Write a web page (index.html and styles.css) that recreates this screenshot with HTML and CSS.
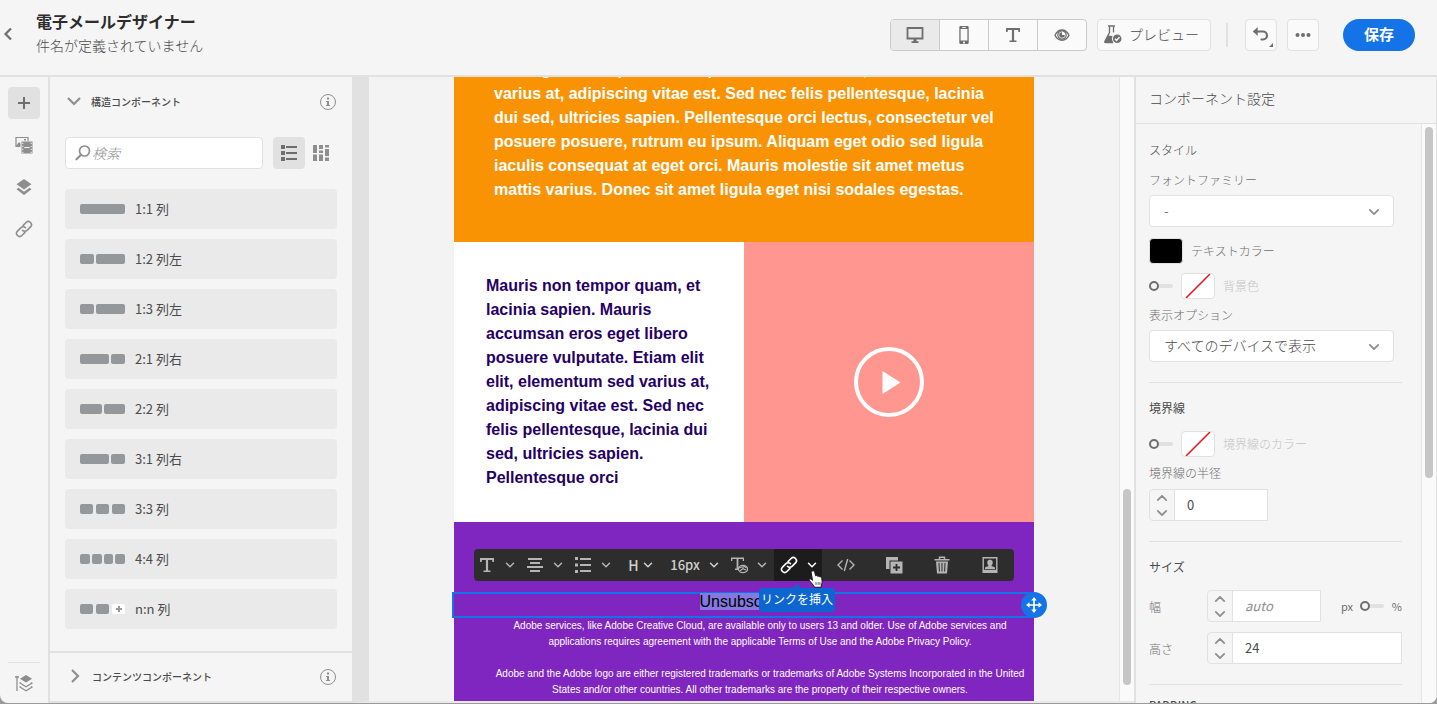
FILE: index.html
```html
<!DOCTYPE html>
<html lang="ja">
<head>
<meta charset="utf-8">
<meta name="viewport" content="width=device-width, initial-scale=1">
<title>電子メールデザイナー</title>
<link rel="stylesheet" href="styles.css">
</head>
<body>
<svg class="sprite" aria-hidden="true">
  <symbol id="chev" viewBox="0 0 10 10"><path d="M1.500 3.200 5 6.700l3.500-3.500" fill="none" stroke="currentColor" stroke-width="1.500" stroke-linecap="round" stroke-linejoin="round"/></symbol>
  <symbol id="info" viewBox="0 0 18 18"><circle cx="9" cy="9" r="7.500" fill="none" stroke="currentColor"/><path d="M8 4.600h2v2H8zM7 8h3v4h1v1H7v-1h1V9H7z" fill="currentColor"/></symbol>
  <symbol id="link" viewBox="0 0 18 18"><g fill="none" stroke="currentColor" stroke-width="1.600" stroke-linecap="round"><path d="M8 5.600 11.100 2.500a3.100 3.100 0 0 1 4.400 4.400L12 10.400a3.100 3.100 0 0 1-4.400 0"/><path d="M10 12.400 6.900 15.500a3.100 3.100 0 0 1-4.400-4.400L6 7.600a3.100 3.100 0 0 1 4.400 0"/></g></symbol>
  <symbol id="text" viewBox="0 0 18 18"><path d="M2 2h14v4h-1.500L14 4h-3.900v10.500h2.400V16h-7v-1.500h2.400V4H4l-.5 2H2z" fill="currentColor"/></symbol>
  <symbol id="list" viewBox="0 0 18 18"><path d="M1 1h4v4H1zM1 7h4v4H1zM1 13h4v4H1zM6 2h11v2H6zM6 8h11v2H6zM6 14h11v2H6z" fill="currentColor"/></symbol>
</svg>
<div class="app">
  <header class="topbar">
    <button class="back" aria-label="戻る"><svg viewBox="0 0 10 14"><path d="M8 1.500 2.500 7 8 12.500" fill="none" stroke="currentColor" stroke-width="2.200"/></svg></button>
    <div class="titles">
      <h1>電子メールデザイナー</h1>
      <p>件名が定義されていません</p>
    </div>
    <div class="segments">
      <button class="is-on" aria-label="デスクトップ"><svg class="i20" viewBox="0 0 20 20"><path d="M2.500 3h15v10.500h-15z" fill="none" stroke="currentColor" stroke-width="1.800"/><path d="M8.500 14h3v2.200h2V18h-7v-1.800h2z" fill="currentColor"/></svg></button>
      <button aria-label="モバイル"><svg class="i20" viewBox="0 0 20 20"><path fill="currentColor" fill-rule="evenodd" d="M6.500 1h7a1.200 1.200 0 0 1 1.200 1.200v15.600a1.200 1.200 0 0 1-1.200 1.200h-7a1.200 1.200 0 0 1-1.200-1.200V2.200A1.200 1.200 0 0 1 6.500 1zM6.600 4v11.600h6.800V4zM8.300 2v1h3.400V2zM10 16.400a1 1 0 1 0 .01 0z"/></svg></button>
      <button aria-label="テキスト"><svg class="i18"><use href="#text"/></svg></button>
      <button aria-label="表示"><svg class="i18" viewBox="0 0 18 18"><path d="M2 9.200C3.500 6 6 4 9 4s5.500 2 7 5.200c-1.500 3.100-4 5-7 5s-5.500-1.900-7-5z" fill="none" stroke="currentColor" stroke-width="1.400"/><circle cx="9" cy="9" r="4.200" fill="none" stroke="currentColor" stroke-width="1.200"/><path d="M9 6.200V9h2.800A2.800 2.800 0 1 1 9 6.200z" fill="currentColor"/></svg></button>
    </div>
    <button class="tool preview"><svg class="i20" viewBox="0 0 20 20"><path d="M6.500 2.500v6L2 17.300a.9.900 0 0 0 .8 1.200H10M10.500 2.500v6" fill="none" stroke="currentColor" stroke-width="1.300"/><path d="M5 1.200h7v1.600H5zM5 11.500l4.500.5L8.800 15l1.600 4H2.500c-1 0-1.500-.7-1-1.600z" fill="currentColor"/><circle cx="14.200" cy="14.700" r="4.300" fill="currentColor"/><path d="m12 14.800 1.600 1.700 2.900-3.400" fill="none" stroke="#fff" stroke-width="1.400"/></svg>プレビュー</button>
    <span class="rule"></span>
    <button class="tool square undo" aria-label="元に戻す"><svg class="i20" viewBox="0 0 20 20"><path d="M3.500 6.500h8.500a4 4 0 0 1 0 8h-1.500" fill="none" stroke="currentColor" stroke-width="2.200" stroke-linecap="round"/><path d="M6.700 2v9L2 6.500z" fill="currentColor"/></svg><i class="corner"></i></button>
    <button class="tool square" aria-label="その他"><svg class="i18" viewBox="0 0 18 18" fill="currentColor"><circle cx="3.500" cy="9" r="2"/><circle cx="9" cy="9" r="2"/><circle cx="14.500" cy="9" r="2"/></svg></button>
    <button class="save">保存</button>
  </header>

  <div class="workspace">
    <nav class="rail">
      <button class="is-on" aria-label="追加"><svg class="i18" viewBox="0 0 18 18"><path d="M9 3v12M3 9h12" stroke="currentColor" stroke-width="2"/></svg></button>
      <button aria-label="アセット"><svg class="i18" viewBox="0 0 18 18"><path d="M5 10.500H1v-9h12V5" fill="none" stroke="currentColor" stroke-width="1.200"/><path d="m1 10 3-4 1.500 1.500v3.300H1zM9 3h2v1.500H9z" fill="currentColor"/><path fill="currentColor" fill-rule="evenodd" d="M6.500 5.500h11v12h-11zM7.300 6.700v1.200h1V6.700zm0 3v1.200h1V9.700zm0 3v1.200h1v-1.200zm0 3v1.200h1v-1.200zm8.400-9v1.200h1V6.700zm0 3v1.200h1V9.700zm0 3v1.200h1v-1.200zm0 3v1.200h1v-1.200zM9.300 11v1h5.400v-1z"/></svg></button>
      <button aria-label="レイヤー"><svg class="i18" viewBox="0 0 18 18" fill="currentColor"><path d="m9 1 7.500 5.200L9 11.500 1.500 6.200zM3.500 9.800 9 13.700l5.500-3.900 2 1.500L9 17l-7.500-5.700z"/></svg></button>
      <button aria-label="リンク"><svg class="i18"><use href="#link"/></svg></button>
      <div class="rail-foot"><button aria-label="構造"><svg class="i18" viewBox="0 0 18 18"><path d="M2 2v15M0 3h4" stroke="currentColor" stroke-width="1.300"/><path d="m11 1 6 3.700-6 3.700-6-3.700z" fill="currentColor"/><path d="m6 8.500-1 .6 6 3.700 6-3.700-1-.6M6 12.500l-1 .6 6 3.700 6-3.700-1-.6" fill="none" stroke="currentColor" stroke-width="1.200"/></svg></button></div>
    </nav>

    <aside class="components">
      <div class="acc">
        <button class="acc-btn"><svg class="i14" viewBox="0 0 14 14"><path d="m1 4 6 6 6-6" fill="none" stroke="currentColor" stroke-width="2.200"/></svg>構造コンポーネント</button>
        <svg class="i18 info"><use href="#info"/></svg>
      </div>
      <div class="searchrow">
        <label class="search"><svg class="i18" viewBox="0 0 18 18"><circle cx="10.500" cy="7" r="5" fill="none" stroke="currentColor" stroke-width="1.700"/><path d="M7 10.800 2.500 15.300" stroke="currentColor" stroke-width="2.200" stroke-linecap="round"/></svg><input type="search" placeholder="検索" aria-label="検索"></label>
        <button class="mode is-on" aria-label="リスト表示"><svg class="i18"><use href="#list"/></svg></button>
        <button class="mode" aria-label="グリッド表示"><svg class="i18" viewBox="0 0 18 18" fill="currentColor"><path d="M1 1h4v8H1zM1 10.500h4V17H1zM7 1h4v4H7zM7 6.500h4V9H7zM7 10.500h4V17H7zM13 1h4v2.500h-4zM13 5h4v7h-4zM13 13.500h4V17h-4z"/></svg></button>
      </div>
      <ul class="cols">
        <li><span class="thumb"><i></i></span>1:1 列</li>
        <li><span class="thumb"><i></i><i class="w2"></i></span>1:2 列左</li>
        <li><span class="thumb"><i></i><i class="w2"></i></span>1:3 列左</li>
        <li><span class="thumb"><i class="w2"></i><i></i></span>2:1 列右</li>
        <li><span class="thumb"><i></i><i></i></span>2:2 列</li>
        <li><span class="thumb"><i class="w2"></i><i></i></span>3:1 列右</li>
        <li><span class="thumb three"><i></i><i></i><i></i></span>3:3 列</li>
        <li><span class="thumb"><i></i><i></i><i></i><i></i></span>4:4 列</li>
        <li><span class="thumb three"><i></i><i></i><i class="plus"></i></span>n:n 列</li>
      </ul>
      <div class="acc acc-closed">
        <button class="acc-btn"><svg class="i14" viewBox="0 0 14 14"><path d="m4 1 6 6-6 6" fill="none" stroke="currentColor" stroke-width="2.200"/></svg>コンテンツコンポーネント</button>
        <svg class="i18 info"><use href="#info"/></svg>
      </div>
    </aside>

    <main class="stage">
      <div class="email">
        <section class="orange">eros eget libero posuere vulputate. Etiam elit elit, elementum sed<br>varius at, adipiscing vitae est. Sed nec felis pellentesque, lacinia<br>dui sed, ultricies sapien. Pellentesque orci lectus, consectetur vel<br>posuere posuere, rutrum eu ipsum. Aliquam eget odio sed ligula<br>iaculis consequat at eget orci. Mauris molestie sit amet metus<br>mattis varius. Donec sit amet ligula eget nisi sodales egestas.</section>
        <section class="split">
          <div class="copy">Mauris non tempor quam, et<br>lacinia sapien. Mauris<br>accumsan eros eget libero<br>posuere vulputate. Etiam elit<br>elit, elementum sed varius at,<br>adipiscing vitae est. Sed nec<br>felis pellentesque, lacinia dui<br>sed, ultricies sapien.<br>Pellentesque orci</div>
          <div class="video"><svg viewBox="0 0 70 70"><circle cx="35" cy="35" r="33" fill="none" stroke="#fff" stroke-width="4"/><path d="M28.500 24 46.500 35.500 28.500 47z" fill="#fff"/></svg></div>
        </section>
        <section class="footer">
          <div class="selected"><mark>Unsubscribe</mark>
            <button class="move" aria-label="移動"><svg class="i18" viewBox="0 0 18 18"><path d="M9 3v12M3 9h12" stroke="#fff" stroke-width="1.700"/><path d="m9 1 2.800 3.500H6.200zM9 17l2.800-3.500H6.200zM1 9l3.500-2.800v5.600zM17 9l-3.500-2.800v5.600z" fill="#fff"/></svg></button>
          </div>
          <p>Adobe services, like Adobe Creative Cloud, are available only to users 13 and older. Use of Adobe services and<br>applications requires agreement with the applicable Terms of Use and the Adobe Privacy Policy.</p>
          <p>Adobe and the Adobe logo are either registered trademarks or trademarks of Adobe Systems Incorporated in the United<br>States and/or other countries. All other trademarks are the property of their respective owners.</p>
          <div class="toolbar" role="toolbar">
            <button aria-label="テキスト"><svg class="i18"><use href="#text"/></svg><svg class="i10"><use href="#chev"/></svg></button>
            <button aria-label="配置"><svg class="i18" viewBox="0 0 18 18" fill="currentColor"><path d="M2 2h14v2H2zM4 6h10v2H4zM1 10h16v2H1zM4 14h10v2H4z"/></svg><svg class="i10"><use href="#chev"/></svg></button>
            <button aria-label="リスト"><svg class="i18" viewBox="0 0 18 18" fill="currentColor"><path d="M1 1h3v3H1zM1 7.500h3v3H1zM1 14h3v3H1zM6 2h11v2H6zM6 8h11v2H6zM6 14h11v2H6z"/></svg><svg class="i10"><use href="#chev"/></svg></button>
            <button class="letter">H<svg class="i10"><use href="#chev"/></svg></button>
            <button class="size">16px<svg class="i10"><use href="#chev"/></svg></button>
            <button aria-label="動的テキスト"><svg class="i18" viewBox="0 0 18 18"><path d="M1 1.500h13V5h-1.300V3H8.400v9.500H10V14H5v-1.500h1.600V3H2.300v2H1z" fill="currentColor"/><ellipse cx="13" cy="13" rx="4.600" ry="3.600" fill="#2d2d2d" stroke="currentColor" stroke-width="1.200"/><path d="M13 9.500v3.300l-3 2M13 12.800l3.500 1.500M9 12l3-1M14 10l2.500 2" stroke="currentColor" stroke-width="1.200" fill="none"/></svg><svg class="i10"><use href="#chev"/></svg></button>
            <button class="active" aria-label="リンクを挿入"><svg class="i18"><use href="#link"/></svg><svg class="i10"><use href="#chev"/></svg></button>
            <button class="single" aria-label="ソース"><svg class="i18" viewBox="0 0 18 18"><path d="M5.500 4.500 1 9l4.500 4.500M12.500 4.500 17 9l-4.500 4.500M10.700 3 7.300 15" fill="none" stroke="currentColor" stroke-width="1.400"/></svg></button>
            <button class="single" aria-label="複製"><svg class="i18" viewBox="0 0 18 18" fill="currentColor"><path d="M1 1h12v3.500H4.500V13H1z"/><path fill-rule="evenodd" d="M5.500 5.500h12v12h-12zM10.600 8v2.600H8v1.800h2.600V15h1.800v-2.600H15v-1.800h-2.600V8z"/></svg></button>
            <button class="single" aria-label="削除"><svg class="i18" viewBox="0 0 18 18"><path d="M1.500 3.800h15M6.500 3.500V1.300h5v2.200" fill="none" stroke="currentColor" stroke-width="1.500"/><path fill="currentColor" fill-rule="evenodd" d="M3 5.500h12L14 17.500H4zM5.500 7l.4 8.500h1L6.500 7zm3 0v8.500h1V7zm3 0-.4 8.500h1l.4-8.500z"/></svg></button>
            <button class="single" aria-label="パーソナライズ"><svg class="i18" viewBox="0 0 18 18"><path d="M2.200 1.700h13.600v14.600H2.200z" fill="none" stroke="currentColor" stroke-width="1.400"/><path d="M2 13.700h14V17H2zM4 13v-1c0-1 2-1.500 3.700-2C6.300 8.500 6 7 6.500 5.300c.6-2 4.400-2 5 0C12 7 11.700 8.500 10.300 10c1.700.5 3.700 1 3.700 2v1z" fill="currentColor"/></svg></button>
          </div>
          <div class="tip" role="tooltip">リンクを挿入</div>
          <svg class="cursor" viewBox="0 0 14 17"><path d="M4 1c1.200-.7 2 .2 2.300 1.300l.8 3.200c1-.6 1.700-.1 2 .5 1-.5 1.600 0 1.900.5 1.300-.4 1.800.6 2 1.700l.3 3.300c0 1.500-.7 2-.9 3.500v1.300H6l-.5-1.300L1.300 10C.5 8.600 1.600 7.800 3 8.800l1.200 1L2.900 2.600c-.1-.7.3-1.300 1.100-1.600z" fill="#fff" stroke="#111" stroke-width=".9"/><path d="M7.500 11.500V14M9.500 11.500V14M11.200 11.500V14" stroke="#222" stroke-width=".7"/></svg>
        </section>
      </div>
      <div class="track stage-track"><i></i></div>
    </main>

    <aside class="settings">
      <h2>コンポーネント設定</h2>
      <div class="settings-body">
        <form class="fields">
          <section>
            <h3 class="soft">スタイル</h3>
            <label class="cap wide" for="family">フォントファミリー</label>
            <div class="select"><select id="family"><option>-</option></select><svg class="i12"><use href="#chev"/></svg></div>
            <div class="swrow first"><button type="button" class="swatch black" aria-label="テキストカラー"></button><span>テキストカラー</span></div>
            <div class="swrow dim"><input class="toggle" type="checkbox" id="bg"><button type="button" class="swatch" aria-label="背景色"><svg viewBox="0 0 32 24"><path d="M4 24 28 0" stroke="#f01018" stroke-width="1.500"/></svg></button><label for="bg">背景色</label></div>
            <label class="cap" for="disp">表示オプション</label>
            <div class="select"><select id="disp"><option>すべてのデバイスで表示</option></select><svg class="i12"><use href="#chev"/></svg></div>
          </section>
          <section>
            <h3>境界線</h3>
            <div class="swrow dim after-title"><input class="toggle" type="checkbox" id="bd"><button type="button" class="swatch" aria-label="境界線のカラー"><svg viewBox="0 0 32 24"><path d="M4 24 28 0" stroke="#f01018" stroke-width="1.500"/></svg></button><label for="bd">境界線のカラー</label></div>
            <label class="cap" for="radius">境界線の半径</label>
            <div class="num radius"><span class="step"><button type="button" aria-label="増やす"><svg class="i12 up"><use href="#chev"/></svg></button><button type="button" aria-label="減らす"><svg class="i12"><use href="#chev"/></svg></button></span><input id="radius" type="text" value="0"></div>
          </section>
          <section>
            <h3>サイズ</h3>
            <div class="sizerow after-title"><label for="w">幅</label><div class="num width"><span class="step"><button type="button" aria-label="増やす"><svg class="i12 up"><use href="#chev"/></svg></button><button type="button" aria-label="減らす"><svg class="i12"><use href="#chev"/></svg></button></span><input id="w" type="text" placeholder="auto"></div><span class="unit">px<input class="toggle" type="checkbox" aria-label="単位">%</span></div>
            <div class="sizerow"><label for="h">高さ</label><div class="num grow"><span class="step"><button type="button" aria-label="増やす"><svg class="i12 up"><use href="#chev"/></svg></button><button type="button" aria-label="減らす"><svg class="i12"><use href="#chev"/></svg></button></span><input id="h" type="text" value="24"></div></div>
          </section>
          <section class="last"><h4>PADDING</h4></section>
        </form>
        <div class="track panel-track"><i></i></div>
      </div>
    </aside>
  </div>
</div>
</body>
</html>
```
FILE: styles.css
```css
*, *::before, *::after { box-sizing: border-box; }
body {
  margin: 0;
  background: #9a9a9a;
  color: #4b4b4b;
  font-family: "Noto Sans CJK JP", "Noto Sans", sans-serif;
  font-size: 14px;
  font-weight: 300;
}
h1, h2, h3, h4, p, ul { margin: 0; padding: 0; }
button, input, select { font: inherit; color: inherit; }
button { display: flex; align-items: center; justify-content: center; padding: 0; border: 0; background: none; }
svg { flex: none; display: block; }
.sprite { position: absolute; width: 0; height: 0; }
.i10 { width: 10px; height: 10px; }
.i12 { width: 12px; height: 12px; }
.i14 { width: 14px; height: 14px; }
.i18 { width: 18px; height: 18px; }
.i20 { width: 20px; height: 20px; }
.up { transform: rotate(180deg); }

.app {
  display: flex;
  flex-direction: column;
  height: calc(100vh - 1px);
  overflow: hidden;
  background: #f5f5f5;
  border-radius: 0 0 8px 8px;
}

/* Header */
.topbar {
  display: flex;
  align-items: flex-start;
  flex: none;
  height: 77px;
  padding: 19px 22px 0 2px;
  border-bottom: 2px solid #e1e1e1;
}
.back { width: 12px; height: 30px; color: #6e6e6e; }
.back svg { width: 10px; height: 14px; }
.titles { flex: 1; margin: -10px 0 0 22px; }
.titles h1 { font-size: 16px; line-height: 24px; font-weight: 700; color: #2c2c2c; }
.titles p { line-height: 24px; }
.segments { display: flex; border: 1px solid #cacaca; border-radius: 4px; background: #fafafa; color: #6e6e6e; overflow: hidden; }
.segments button { width: 49px; height: 30px; }
.segments button + button { border-left: 1px solid #cacaca; }
.segments .is-on { width: 48px; background: #eaeaea; }
.tool { height: 32px; border: 1px solid #e1e1e1; border-radius: 4px; background: #fafafa; color: #6e6e6e; }
.preview { justify-content: flex-start; width: 114px; gap: 6px; padding: 0 0 2px 5px; margin-left: 10px; color: #4b4b4b; }
.preview svg { color: #6e6e6e; }
.rule { width: 2px; height: 24px; margin: 4px 17px 0 15px; background: #e1e1e1; }
.square { width: 32px; }
.square + .square { margin-left: 10px; }
.undo { position: relative; }
.corner { position: absolute; right: 3px; bottom: 3px; border: 2px solid #6e6e6e; border-top-color: transparent; border-left-color: transparent; }
.save { width: 72px; height: 32px; padding-bottom: 3px; margin-left: 24px; border-radius: 16px; background: #1473e6; color: #fff; font-size: 15px; font-weight: 700; }

.workspace { display: flex; flex: 1; min-height: 0; }

/* Icon rail */
.rail {
  display: flex;
  flex-direction: column;
  align-items: center;
  gap: 10px;
  width: 50px;
  padding-top: 10px;
  border-right: 2px solid #e1e1e1;
  color: #8e8e8e;
}
.rail button { width: 32px; height: 32px; border-radius: 4px; }
.rail .is-on { background: #e1e1e1; color: #6e6e6e; }
.rail-foot { display: flex; justify-content: center; width: 32px; height: 41px; padding-top: 4px; margin-top: auto; border-top: 1px solid #e1e1e1; }

/* Component list */
.components {
  display: flex;
  flex-direction: column;
  width: 302px;
  border-bottom: 2px solid #e1e1e1;
}
.acc { display: flex; align-items: center; justify-content: space-between; height: 50px; padding: 0 15px 0 17px; }
.acc-btn { gap: 10px; padding-bottom: 2px; font-size: 10px; font-weight: 500; }
.acc-btn svg, .info { color: #8e8e8e; }
.acc-closed { margin-top: auto; border-top: 2px solid #e1e1e1; padding-left: 18px; }
.searchrow { display: flex; padding: 10px 15px 20px; }
.search { display: flex; align-items: center; flex: 1; height: 32px; padding: 0 0 1px 8px; border: 1px solid #e1e1e1; border-radius: 4px; background: #fff; color: #8e8e8e; }
.search input { width: 100%; min-width: 0; padding: 0; border: 0; outline: 0; background: none; }
.search input::placeholder { color: #8e8e8e; font-style: italic; }
.mode { width: 32px; height: 32px; border-radius: 4px; color: #8e8e8e; }
.mode.is-on { margin-left: 10px; background: #e1e1e1; color: #6e6e6e; }
.cols { display: flex; flex-direction: column; gap: 10px; padding: 0 15px; list-style: none; }
.cols li { display: flex; align-items: center; gap: 10px; height: 40px; padding: 0 0 1px 15px; border-radius: 4px; background: #eaeaea; font-size: 13px; font-weight: 400; }
.thumb { display: flex; gap: 2px; width: 45px; height: 10px; }
.thumb.three { gap: 3px; }
.thumb i { flex: 1 1 0; border-radius: 2px; background: #95989b; }
.thumb .w2 { flex-grow: 2; }
.thumb .plus { background: linear-gradient(#999, #999) center / 6px 2px no-repeat, linear-gradient(#999, #999) center / 2px 6px no-repeat, #fff; }

/* Editing stage */
.stage { display: flex; justify-content: space-between; flex: 1; min-width: 0; overflow: hidden; border-left: 17px solid #e1e1e1; border-bottom: 2px solid #e9e9e9; background: #f3f3f3; }
.email { width: 580px; margin: -19px auto 0; font-family: "Liberation Sans", Arial, sans-serif; font-size: 16px; line-height: 24px; }
.orange { padding: 0 40px 40px; background: #f99304; color: #fff; font-weight: 700; white-space: nowrap; }
.split { display: grid; grid-template-columns: 1fr 1fr; }
.copy { padding: 32px; background: #fff; color: #250066; font-weight: 700; white-space: nowrap; }
.video { display: flex; align-items: center; justify-content: center; background: #ff968f; }
.video svg { width: 70px; height: 70px; }
.footer { position: relative; height: 300px; padding-top: 70px; background: #8026c0; color: #fff; }
.selected { position: relative; height: 26px; margin: 0 0 0 -2px; padding-left: 2px; border: 2px solid #1473e6; font-weight: 400; line-height: 16px; text-align: center; }
.selected mark { background: #8479e0; color: #000; }
.move { position: absolute; top: -2px; right: -15px; width: 26px; height: 26px; border-radius: 50%; background: #1473e6; }
.footer p { padding: 0 8px 0 40px; margin-bottom: 16px; font-size: 10px; font-weight: 400; line-height: 16px; text-align: center; white-space: nowrap; }
.toolbar { position: absolute; top: 27px; left: 20px; display: grid; grid-template-columns: repeat(4, 48fr) 60fr repeat(6, 48fr); width: 540px; height: 32px; border-radius: 4px; overflow: hidden; background: #2d2d2d; color: #b5b5b5; font-family: "Noto Sans CJK JP", sans-serif; font-size: 14px; font-weight: 500; }
.toolbar button { gap: 9px; padding-right: 3px; }
.toolbar .letter { gap: 4px; color: #d0d0d0; }
.toolbar .size { color: #d0d0d0; font-size: 13px; }
.toolbar .active { padding: 0; background: #1c1c1c; color: #fff; }
.toolbar .single { padding: 0; }
.tip { position: absolute; top: 66px; left: 305px; width: 76px; height: 24px; border-radius: 4px; background: #0d66d0; font: 400 12px/22px "Noto Sans CJK JP", sans-serif; text-align: center; }
.tip::before { content: ""; position: absolute; top: -4px; left: 34px; border: 4px solid transparent; border-top: 0; border-bottom-color: #0d66d0; }
.cursor { position: absolute; top: 48px; left: 354px; width: 15px; height: 18px; }

.track { flex: none; border-left: 1px solid #e6e6e6; background: #fafafa; }
.track i { display: block; width: 8px; margin: 0 3px; border-radius: 4px; background: #c6c6c6; }
.stage-track { width: 15px; padding-top: 412px; }
.stage-track i { height: 196px; }

/* Settings */
.settings { display: flex; flex-direction: column; width: 303px; border-left: 2px solid #e1e1e1; border-right: 1px solid #e1e1e1; }
.settings h2 { flex: none; height: 47px; padding-left: 13px; border-bottom: 1px solid #e1e1e1; font-size: 14px; line-height: 43px; font-weight: 300; }
.settings-body { display: flex; flex: 1; min-height: 0; overflow: hidden; }
.fields { flex: 1; padding: 1px 19px 0 13px; font-size: 12px; color: #6e6e6e; }
.fields section { padding: 15px 0 20px; border-bottom: 1px solid #e1e1e1; }
.fields .last { padding-top: 10px; border: 0; }
.fields h3 { font-size: 12px; line-height: 20px; font-weight: 400; color: #4b4b4b; }
.fields .soft { font-weight: 300; }
.fields h4 { font-size: 11px; line-height: 20px; font-weight: 500; color: #4b4b4b; }
.cap { display: block; margin: 6px 0 5px; line-height: 20px; }
.cap.wide { margin-top: 10px; }
.select { position: relative; width: 245px; }
.select select { width: 100%; height: 32px; padding: 0 14px 2px; border: 1px solid #e1e1e1; border-radius: 4px; appearance: none; background: #fff; color: #4b4b4b; font-size: 14px; }
.select svg { position: absolute; top: 11px; right: 14px; color: #8e8e8e; pointer-events: none; }
.swrow { display: flex; align-items: center; gap: 8px; margin-top: 9px; }
.swrow span, .swrow label { padding-bottom: 2px; }
.swrow.first { margin-top: 11px; }
.fields .after-title { margin-top: 13px; }
.dim label { color: #c3c3c3; }
.swatch { width: 34px; height: 26px; border: 1px solid #e1e1e1; border-radius: 4px; background: #fff; }
.swatch svg { width: 32px; height: 24px; }
.swatch.black { background: #000; }
.toggle { display: flex; align-items: center; flex: none; width: 24px; height: 12px; margin: 0; appearance: none; }
.toggle::before { content: ""; width: 10px; height: 10px; border: 2px solid #6e6e6e; border-radius: 50%; }
.toggle::after { content: ""; flex: 1; height: 4px; border-radius: 0 2px 2px 0; background: #e1e1e1; }
.num { display: flex; height: 32px; border: 1px solid #e1e1e1; border-radius: 4px 0 0 4px; }
.num input { flex: 1; width: 0; min-width: 0; padding: 0 12px 1px; border: 0; background: #fff; color: #4b4b4b; font-size: 13px; font-weight: 400; }
.num input::placeholder { color: #8e8e8e; font-style: italic; }
.step { display: flex; flex-direction: column; justify-content: center; gap: 2px; width: 25px; border-right: 1px solid #e1e1e1; }
.step button { width: 24px; height: 13px; color: #8e8e8e; }
.radius { width: 119px; margin-top: 6px; }
.sizerow { display: flex; align-items: center; margin-top: 10px; }
.sizerow > label { width: 58px; }
.width { width: 114px; }
.grow { flex: 1; }
.unit { display: flex; align-items: center; justify-content: space-between; flex: 1; margin-left: 20px; font-size: 11px; font-weight: 400; }
.panel-track { width: 15px; padding-top: 3px; }
.panel-track i { height: 351px; }
```
